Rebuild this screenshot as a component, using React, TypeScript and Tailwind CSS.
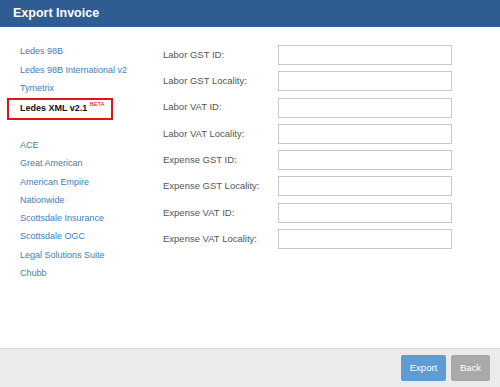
import React from "react";

const formats = ["Ledes 98B", "Ledes 98B International v2", "Tymetrix"];
const carriers = [
  "ACE",
  "Great American",
  "American Empire",
  "Nationwide",
  "Scottsdale Insurance",
  "Scottsdale OGC",
  "Legal Solutions Suite",
  "Chubb",
];
const fields = [
  "Labor GST ID:",
  "Labor GST Locality:",
  "Labor VAT ID:",
  "Labor VAT Locality:",
  "Expense GST ID:",
  "Expense GST Locality:",
  "Expense VAT ID:",
  "Expense VAT Locality:",
];

export default function App() {
  return (
    <div
      className="flex h-[387px] w-[500px] flex-col bg-white"
      style={{ fontFamily: '"Liberation Sans", Arial, sans-serif' }}
    >
      <header className="flex h-[27px] items-center bg-[#2e5c93] px-[13px]">
        <h1 className="text-[12.5px] font-bold text-white">Export Invoice</h1>
      </header>

      <main className="flex flex-1 pt-[16px]">
        <nav className="flex w-[163px] flex-col pl-[7px] text-[9px] text-[#3f7eb3]">
          {formats.map((f) => (
            <a key={f} className="flex h-[18.2px] items-center pl-[13px]">
              {f}
            </a>
          ))}
          <div className="flex h-[22px] w-[106px] items-center border-2 border-[#e0141b] pl-[11px] text-[9px] font-bold text-[#111]">
            Ledes XML v2.1
            <sup className="ml-[2px] -mt-[4px] text-[6px] font-normal text-[#e0141b]">BETA</sup>
          </div>
          <div className="h-[17px]" />
          {carriers.map((c) => (
            <a key={c} className="flex h-[18.3px] items-center pl-[13px]">
              {c}
            </a>
          ))}
        </nav>

        <div className="mt-[2px] flex flex-col gap-[6.3px]">
          {fields.map((f) => (
            <div key={f} className="flex h-[20px] items-center">
              <label className="w-[115px] text-[9.5px] text-[#555]">{f}</label>
              <input
                type="text"
                className="h-[20px] w-[174px] border border-[#c8c8c8] bg-white outline-none"
              />
            </div>
          ))}
        </div>
      </main>

      <footer className="flex h-[39px] items-center justify-end gap-[5px] border-t border-[#dadada] bg-[#ebebeb] pr-[10px]">
        <button className="h-[26px] w-[45px] rounded-[2px] bg-[#5d9dd4] text-[9.5px] text-white">
          Export
        </button>
        <button className="h-[26px] w-[39px] rounded-[2px] bg-[#a9a9a9] text-[9.5px] text-white">
          Back
        </button>
      </footer>
    </div>
  );
}
